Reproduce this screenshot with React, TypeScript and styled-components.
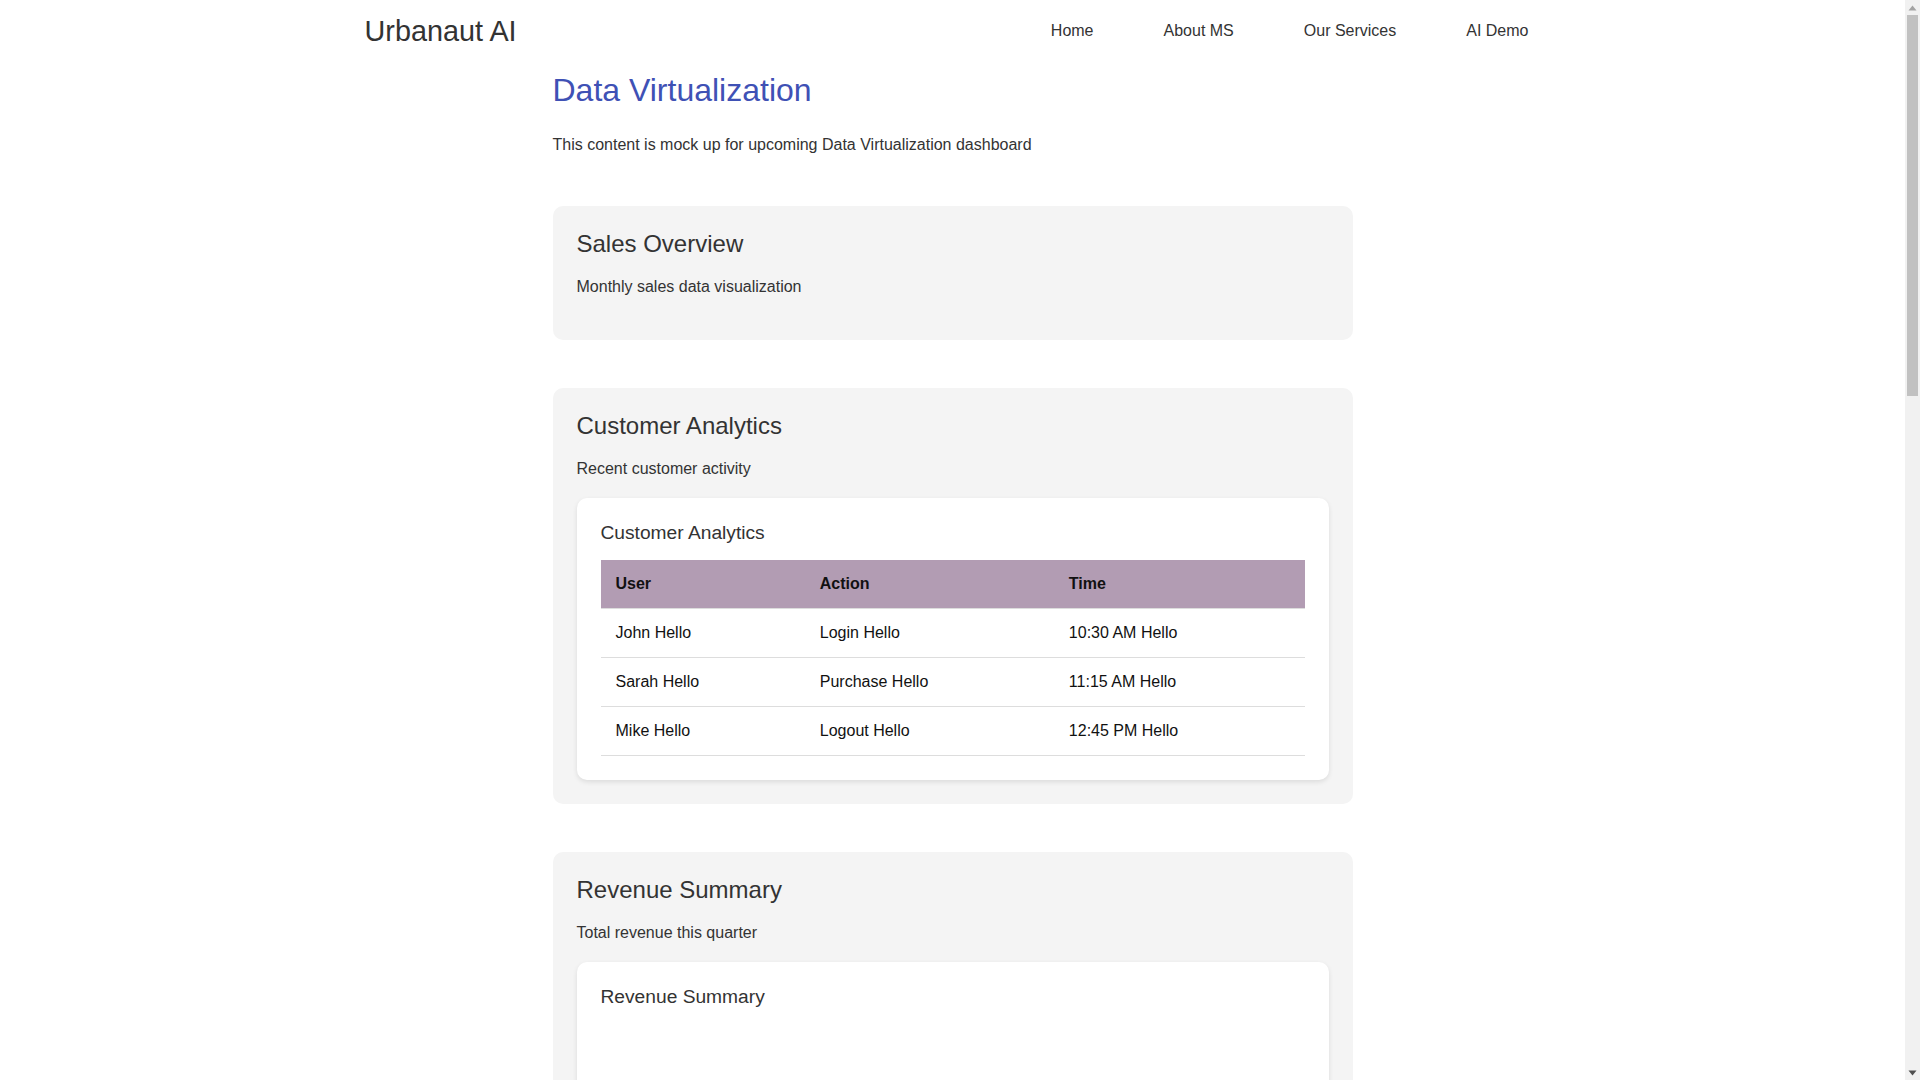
import styled, { createGlobalStyle } from "styled-components";

const GlobalStyle = createGlobalStyle`
  * {
    box-sizing: border-box;
  }

  body {
    margin: 0;
    font-family: "Liberation Sans", Arial, sans-serif;
    font-size: 16px;
    color: #333;
    background: #fff;
  }
`;

const Frame = styled.div`
  display: flex;
  height: 100vh;
  overflow: hidden;
`;

const Page = styled.div`
  flex: 1;
  min-width: 0;
`;

const Scrollbar = styled.div`
  display: flex;
  flex-direction: column;
  flex: 0 0 15px;
  background: #f1f1f1;
`;

const ScrollArrow = styled.div`
  display: flex;
  flex: 0 0 15px;
  align-items: center;
  justify-content: center;
`;

const ScrollThumb = styled.div`
  height: 381px;
  margin: 0 2px;
  background: #c1c1c1;
`;

const ScrollGap = styled.div`
  flex: 1;
`;

const Header = styled.header`
  display: flex;
  justify-content: space-between;
  align-items: center;
  max-width: 1200px;
  height: 62px;
  margin: 0 auto;
  padding: 0 24px 0 12px;
`;

const Logo = styled.div`
  font-size: 28.8px;
  color: #333;
`;

const Nav = styled.nav`
  display: flex;
  gap: 70px;
`;

const NavLink = styled.a`
  color: #333;
  text-decoration: none;
`;

const Main = styled.main`
  max-width: 800px;
  margin: 0 auto;
`;

const PageTitle = styled.h1`
  margin: 10px 0 27px;
  font-size: 32px;
  font-weight: 400;
  color: #3f51b5;
`;

const Intro = styled.p`
  margin: 0 0 52px;
  color: #333;
`;

const Section = styled.section`
  margin-bottom: 48px;
  padding: 24px;
  background: #f4f4f4;
  border-radius: 10px;
`;

const SectionTitle = styled.h2`
  margin: 0 0 20px;
  font-size: 24px;
  font-weight: 400;
  color: #333;
`;

const SectionText = styled.p`
  margin: 0 0 20px;
  color: #333;
`;

const Panel = styled.div`
  padding: 24px;
  background: #fff;
  border-radius: 10px;
  box-shadow: 0 2px 5px rgba(0, 0, 0, 0.1);
`;

const PanelTitle = styled.h3`
  margin: 0 0 16px;
  font-size: 19.2px;
  font-weight: 400;
  color: #333;
`;

const Table = styled.table`
  width: 100%;
  border-collapse: collapse;
`;

const HeadCell = styled.th`
  padding: 15px;
  background: #b29cb3;
  border-bottom: 1px solid #ddd;
  color: #111;
  font-weight: 700;
  text-align: left;
`;

const Cell = styled.td`
  padding: 15px;
  border-bottom: 1px solid #ddd;
  color: #111;
  text-align: left;
`;

const ChartArea = styled.div`
  height: 400px;
`;

const rows = [
  ["John Hello", "Login Hello", "10:30 AM Hello"],
  ["Sarah Hello", "Purchase Hello", "11:15 AM Hello"],
  ["Mike Hello", "Logout Hello", "12:45 PM Hello"],
];

export default function App() {
  return (
    <Frame>
      <GlobalStyle />
      <Page>
        <Header>
          <Logo>Urbanaut AI</Logo>
          <Nav>
            <NavLink href="#">Home</NavLink>
            <NavLink href="#">About MS</NavLink>
            <NavLink href="#">Our Services</NavLink>
            <NavLink href="#">AI Demo</NavLink>
          </Nav>
        </Header>
        <Main>
          <PageTitle>Data Virtualization</PageTitle>
          <Intro>This content is mock up for upcoming Data Virtualization dashboard</Intro>
          <Section>
            <SectionTitle>Sales Overview</SectionTitle>
            <SectionText>Monthly sales data visualization</SectionText>
          </Section>
          <Section>
            <SectionTitle>Customer Analytics</SectionTitle>
            <SectionText>Recent customer activity</SectionText>
            <Panel>
              <PanelTitle>Customer Analytics</PanelTitle>
              <Table>
                <thead>
                  <tr>
                    <HeadCell>User</HeadCell>
                    <HeadCell>Action</HeadCell>
                    <HeadCell>Time</HeadCell>
                  </tr>
                </thead>
                <tbody>
                  {rows.map((row) => (
                    <tr key={row[0]}>
                      {row.map((value) => (
                        <Cell key={value}>{value}</Cell>
                      ))}
                    </tr>
                  ))}
                </tbody>
              </Table>
            </Panel>
          </Section>
          <Section>
            <SectionTitle>Revenue Summary</SectionTitle>
            <SectionText>Total revenue this quarter</SectionText>
            <Panel>
              <PanelTitle>Revenue Summary</PanelTitle>
              <ChartArea />
            </Panel>
          </Section>
        </Main>
      </Page>
      <Scrollbar>
        <ScrollArrow>
          <svg width="9" height="6" viewBox="0 0 9 6">
            <path d="M4.5 0.5 L8.5 5.5 L0.5 5.5 Z" fill="#a3a3a3" />
          </svg>
        </ScrollArrow>
        <ScrollThumb />
        <ScrollGap />
        <ScrollArrow>
          <svg width="9" height="6" viewBox="0 0 9 6">
            <path d="M0.5 0.5 L8.5 0.5 L4.5 5.5 Z" fill="#505050" />
          </svg>
        </ScrollArrow>
      </Scrollbar>
    </Frame>
  );
}
